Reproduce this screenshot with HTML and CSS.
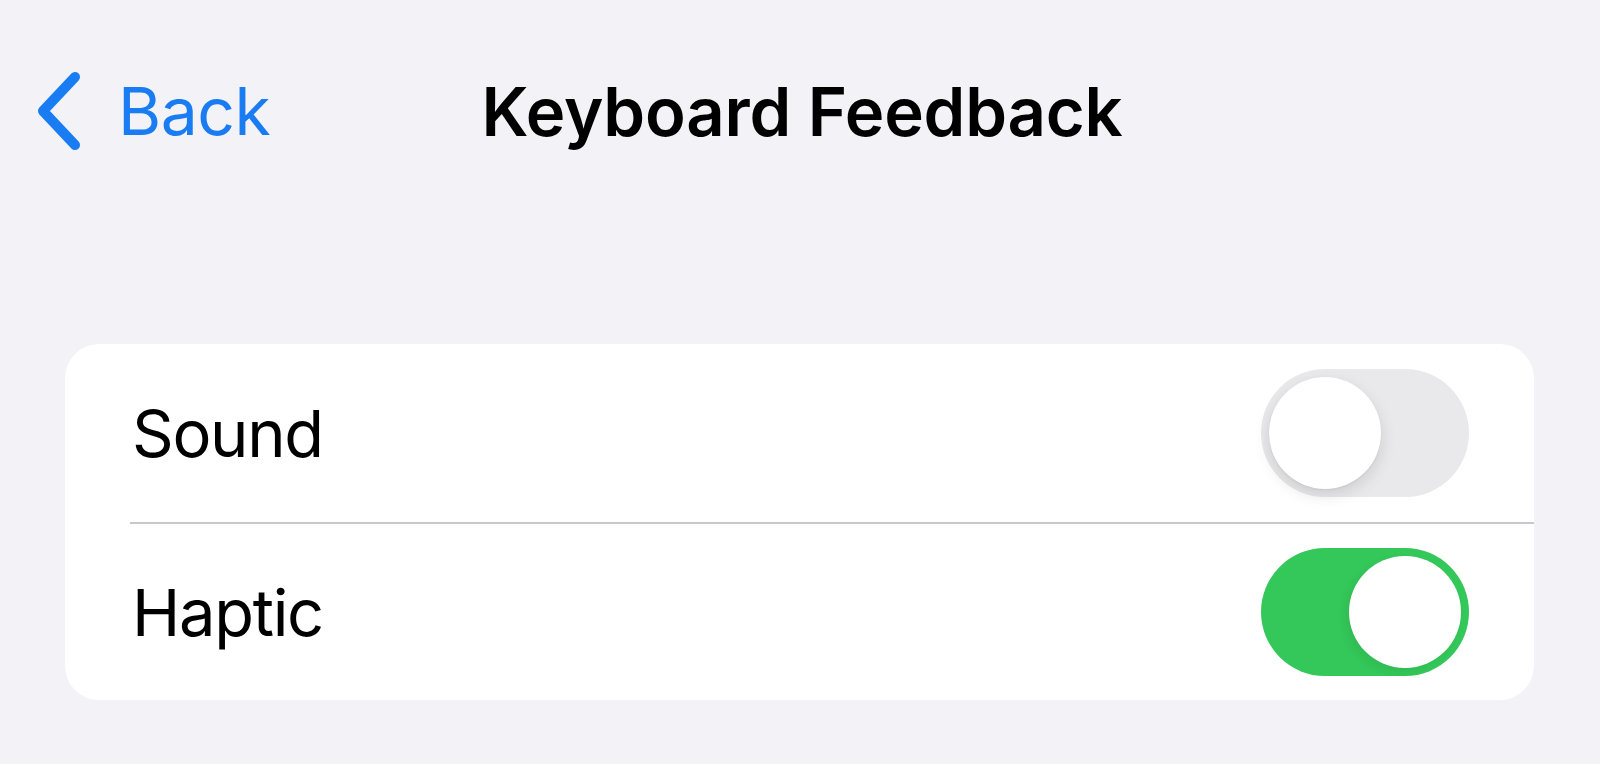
FILE: index.html
```html
<!DOCTYPE html>
<html lang="en">

<head>
    <meta charset="UTF-8">
    <meta name="viewport" content="width=device-width, initial-scale=1.0">
    <title>Keyboard Feedback</title>
    <link rel="stylesheet" href="styles.css">
</head>

<body>
    <div class="nav-bar">
        <a class="back-link" href="javascript:;">
            <svg class="back-icon" width="46" height="80" viewBox="0 0 46 80">
                <path d="M39 6 L7 40 L39 74" fill="none" stroke="#1a7cf2" stroke-width="10" stroke-linecap="round" stroke-linejoin="round" />
            </svg>
            <span>Back</span>
        </a>
        <div class="nav-title">Keyboard Feedback</div>
        <div></div>
    </div>

    <div class="settings-group">
        <div class="settings-row">
            <span class="row-label">Sound</span>
            <div class="switch"><div class="switch-knob"></div></div>
        </div>
        <div class="settings-row">
            <span class="row-label">Haptic</span>
            <div class="switch switch-on"><div class="switch-knob"></div></div>
        </div>
    </div>
</body>

</html>
```

FILE: styles.css
```css
body {
    margin: 0px;
    background: #f2f2f7;
    font-family: Inter, "Noto Sans", sans-serif;
    color: #000000;
}

a {
    text-decoration: none;
}

.nav-bar {
    display: grid;
    grid-template-columns: 1fr auto 1fr;
    align-items: center;
    height: 222px;
}

.back-link {
    display: flex;
    align-items: center;
    padding-left: 36px;
    color: #1a7cf2;
    font-size: 66px;
    font-weight: 400;
    letter-spacing: -0.5px;
}

.back-icon {
    display: block;
    margin-right: 36px;
}

.nav-title {
    font-size: 67px;
    font-weight: 600;
    letter-spacing: -0.2px;
    padding-left: 4px;
}

.settings-group {
    margin: 122px 66px 0px 65px;
    background: #ffffff;
    border-radius: 34px;
    overflow: hidden;
}

.settings-row {
    display: flex;
    align-items: center;
    justify-content: space-between;
    height: 178px;
    margin-left: 65px;
    padding-right: 65px;
    box-sizing: border-box;
}

.settings-row + .settings-row {
    border-top: 2px solid #c8c8cc;
}

.row-label {
    font-size: 65px;
    letter-spacing: -1.3px;
    padding-left: 2px;
}

.switch {
    position: relative;
    width: 208px;
    height: 128px;
    border-radius: 64px;
    background: #e9e9eb;
}

.switch-knob {
    position: absolute;
    top: 8px;
    left: 8px;
    width: 112px;
    height: 112px;
    border-radius: 56px;
    background: #ffffff;
    box-shadow: 0px 6px 16px rgba(0, 0, 0, .12), 0px 1px 2px rgba(0, 0, 0, .06);
}

.switch-on {
    background: #34c759;
}

.switch-on .switch-knob {
    left: 88px;
    box-shadow: -4px 4px 10px rgba(0, 0, 0, .06);
}
```
